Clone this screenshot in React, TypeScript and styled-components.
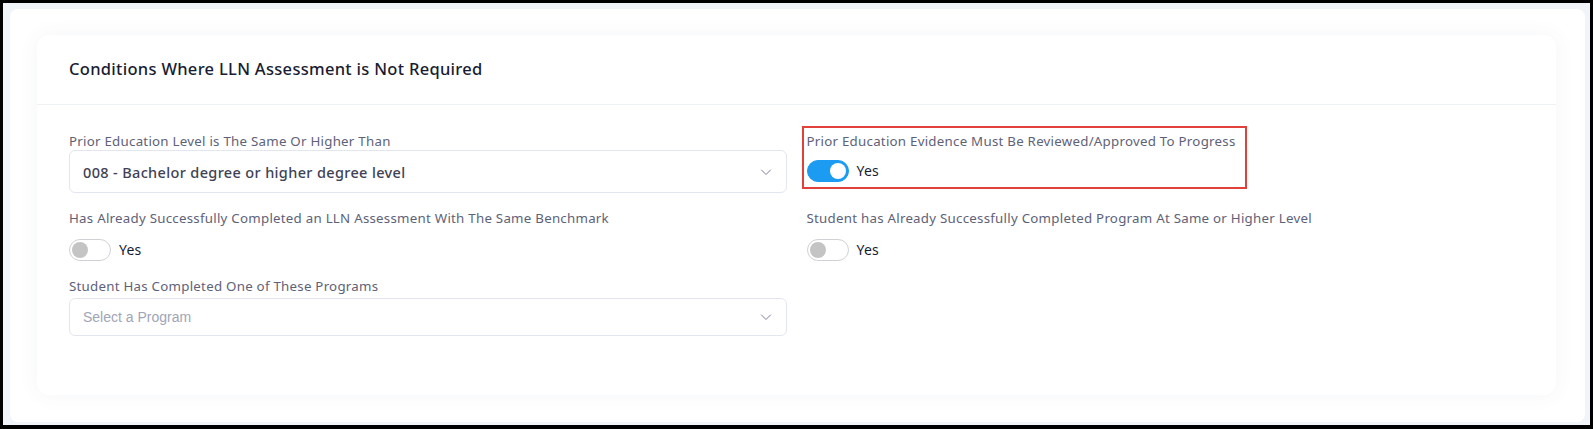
import React from "react";
import styled, { createGlobalStyle } from "styled-components";

const GlobalStyle = createGlobalStyle`
  html, body {
    margin: 0;
    padding: 0;
    background: #000;
  }
  * { box-sizing: border-box; }
`;

const Frame = styled.div`
  padding: 3px 3px 4px 3px;
  background: #000;
  width: 1593px;
  height: 429px;
`;

const Canvas = styled.div`
  background: #f1f4f8;
  padding: 6px 5px 3px 7px;
  height: 100%;
`;

const Panel = styled.div`
  background: #ffffff;
  border-radius: 8px;
  height: 100%;
  padding: 26px 29px 27px 27px;
`;

const Card = styled.section`
  background: #ffffff;
  border-radius: 12px;
  box-shadow: 0 0 20px 0 rgba(76, 87, 125, 0.06);
  height: 100%;
  font-family: "Noto Sans", "Open Sans", sans-serif;
`;

const CardHeader = styled.header`
  padding: 23px 32px 25px;
  border-bottom: 1px solid #eff2f5;
`;

const Title = styled.h3`
  margin: 0;
  font-size: 16.5px;
  line-height: 21px;
  letter-spacing: 0.3px;
  font-weight: 500;
  color: #181c32;
`;

const CardBody = styled.div`
  padding: 27px 32px 32px;
  display: grid;
  grid-template-columns: 1fr 1fr;
  column-gap: 20px;
  row-gap: 16px;
  align-items: start;
`;

const Field = styled.div<{ $highlighted?: boolean }>`
  display: flex;
  flex-direction: column;
  align-items: flex-start;
  ${(p) =>
    p.$highlighted &&
    `
    justify-self: start;
    border: 2px solid #e2403b;
    padding: 4px 9px 5px 3px;
    margin: -6px 0 0 -5px;
  `}
`;

const Label = styled.label`
  font-size: 13.3px;
  line-height: 18px;
  letter-spacing: 0.25px;
  color: #5e6278;
  font-weight: 400;
  white-space: nowrap;
`;

const Select = styled.div<{ $compact?: boolean }>`
  width: 100%;
  height: ${(p) => (p.$compact ? "38px" : "43px")};
  border: 1px solid #e4e6ef;
  border-radius: 6px;
  display: flex;
  align-items: center;
  justify-content: space-between;
  padding: 0 14px 0 13px;
  margin-top: ${(p) => (p.$compact ? "3px" : "0")};
`;

const SelectValue = styled.span`
  font-size: 14.5px;
  letter-spacing: 0.35px;
  font-weight: 500;
  color: #3f4254;
`;

const Placeholder = styled.span`
  font-family: "Liberation Sans", Arial, sans-serif;
  font-size: 14px;
  color: #a1a5b7;
`;

const Chevron = styled.svg`
  width: 12px;
  height: 12px;
  flex: none;
`;

const ToggleRow = styled.div<{ $top: number }>`
  display: flex;
  align-items: center;
  gap: 8px;
  margin-top: ${(p) => p.$top}px;
`;

const Track = styled.span<{ $on?: boolean }>`
  position: relative;
  width: 42px;
  height: 22px;
  border-radius: 11px;
  background: ${(p) => (p.$on ? "#1b9cf2" : "#ffffff")};
  border: 1px solid ${(p) => (p.$on ? "#1b9cf2" : "#cfd1d6")};
  flex: none;
`;

const Knob = styled.span<{ $on?: boolean }>`
  position: absolute;
  top: 2px;
  left: ${(p) => (p.$on ? "22px" : "2px")};
  width: 16px;
  height: 16px;
  border-radius: 50%;
  background: ${(p) => (p.$on ? "#ffffff" : "#c4c4c4")};
`;

const ToggleText = styled.span`
  font-size: 14px;
  line-height: 20px;
  letter-spacing: 0.2px;
  color: #181c32;
`;

const ChevronDown = () => (
  <Chevron viewBox="0 0 12 12" fill="none">
    <path d="M1.5 4l4.5 4.5L10.5 4" stroke="#7e8299" strokeWidth="1" strokeLinecap="round" strokeLinejoin="round" />
  </Chevron>
);

const Toggle = ({ on, top }: { on?: boolean; top: number }) => (
  <ToggleRow $top={top}>
    <Track $on={on}>
      <Knob $on={on} />
    </Track>
    <ToggleText>Yes</ToggleText>
  </ToggleRow>
);

export default function App() {
  return (
    <>
      <GlobalStyle />
      <Frame>
        <Canvas>
          <Panel>
            <Card>
              <CardHeader>
                <Title>Conditions Where LLN Assessment is Not Required</Title>
              </CardHeader>
              <CardBody>
                <Field>
                  <Label>Prior Education Level is The Same Or Higher Than</Label>
                  <Select>
                    <SelectValue>008 - Bachelor degree or higher degree level</SelectValue>
                    <ChevronDown />
                  </Select>
                </Field>
                <Field $highlighted>
                  <Label>Prior Education Evidence Must Be Reviewed/Approved To Progress</Label>
                  <Toggle on top={10} />
                </Field>

                <Field>
                  <Label>Has Already Successfully Completed an LLN Assessment With The Same Benchmark</Label>
                  <Toggle top={12} />
                </Field>
                <Field>
                  <Label>Student has Already Successfully Completed Program At Same or Higher Level</Label>
                  <Toggle top={12} />
                </Field>

                <Field>
                  <Label>Student Has Completed One of These Programs</Label>
                  <Select $compact>
                    <Placeholder>Select a Program</Placeholder>
                    <ChevronDown />
                  </Select>
                </Field>
              </CardBody>
            </Card>
          </Panel>
        </Canvas>
      </Frame>
    </>
  );
}
